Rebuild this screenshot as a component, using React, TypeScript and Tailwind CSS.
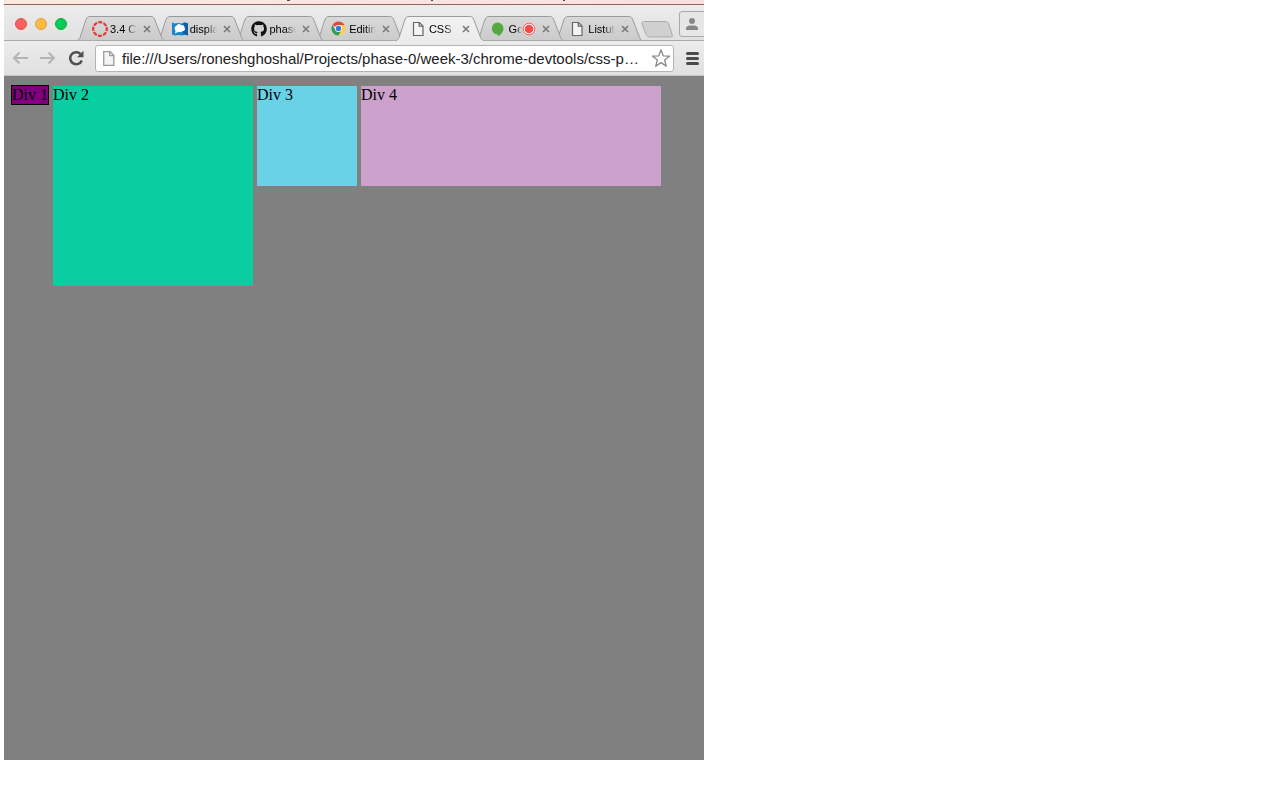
import type { ReactNode } from "react";
import { FaGithub } from "react-icons/fa";

function DocIcon({ className }: { className: string }) {
  return (
    <svg viewBox="0 0 14 16" className={className} fill="none" stroke="currentColor" strokeWidth="1.2">
      <path d="M2.5 1.5h6l3.500 3.500v9.500h-9.500z" fill="#f4f4f4" />
      <path d="M8.2 1.5v3.700h3.700" />
    </svg>
  );
}

function CanvasIcon() {
  return (
    <svg viewBox="0 0 16 16" className="size-4" fill="none">
      <circle cx="8" cy="8" r="6.8" stroke="#e5392d" strokeWidth="2.2" strokeDasharray="4.1 1.24" strokeDashoffset="2" />
    </svg>
  );
}

function DisplayIcon() {
  return (
    <svg viewBox="0 0 16 16" className="size-4">
      <path d="M0 1.500l3 1 3-.5 4 .5 3-1 3 1v12l-3-1-3 1-4-.5-3 .5-3-1z" fill="#1a86c8" />
      <path d="M11 2l2-.5 3 1v12l-3-1-2 .5z" fill="#0d62a4" />
      <path d="M5 4.200c1-1.500 3-1.500 4 0 2-.5 3.800.5 3.500 2.500 1.300 1.600 0 3.500-2.300 3.500-1 1.200-2.700 1.300-3.700.6L3 12.500l.6-2.700C2 8.500 2.500 5 5 4.200z" fill="#fff" />
    </svg>
  );
}

function ChromeIcon() {
  return (
    <svg viewBox="0 0 16 16" className="size-[15px]">
      <path d="M8 8L1.500 4.250A7.500 7.500 0 0 1 14.500 4.250z" fill="#dd4b3e" />
      <path d="M8 8V4.250h6.500A7.500 7.500 0 0 1 8 15.500L11 10z" fill="#fcd04b" />
      <path d="M8 8l3 2-3 5.500A7.500 7.500 0 0 1 1.500 4.250L5 10z" fill="#33a05a" />
      <circle cx="8" cy="8" r="3.700" fill="#fff" />
      <circle cx="8" cy="8" r="2.900" fill="#3b78d8" />
    </svg>
  );
}

function HangoutsIcon() {
  return (
    <svg viewBox="0 0 14 16" className="h-4 w-3.5">
      <path d="M6.500 1.500a6 6 0 0 1 6 6c0 3.500-2.700 6.200-5.500 8v-2A6 6 0 1 1 6.500 1.500z" fill="#53a93f" />
    </svg>
  );
}

function RecordIcon() {
  return (
    <svg viewBox="0 0 14 14" className="size-3.5 shrink-0">
      <circle cx="7" cy="7" r="5.800" fill="#fff" stroke="#f8625e" />
      <circle cx="7" cy="7" r="4.300" fill="#fb4848" />
    </svg>
  );
}

type TabInfo = { title: string; icon: ReactNode; layer: string; active?: boolean; recording?: boolean };

const tabs: TabInfo[] = [
  { title: "3.4 C", icon: <CanvasIcon />, layer: "z-7" },
  { title: "displa", icon: <DisplayIcon />, layer: "z-6" },
  { title: "phase", icon: <FaGithub className="size-4 text-[#111]" />, layer: "z-5" },
  { title: "Editin", icon: <ChromeIcon />, layer: "z-4" },
  { title: "CSS", icon: <DocIcon className="h-4 w-3.5 text-[#666]" />, layer: "z-10", active: true },
  { title: "Go", icon: <HangoutsIcon />, layer: "z-3", recording: true },
  { title: "Listut", icon: <DocIcon className="h-4 w-3.5 text-[#666]" />, layer: "z-2" },
];

function Tab({ title, icon, layer, active, recording }: TabInfo) {
  return (
    <li className={`relative -ml-2 h-[25px] min-w-0 flex-1 ${layer}`}>
      <svg viewBox="0 0 88 25" preserveAspectRatio="none" className="absolute inset-0 size-full">
        <defs>
          <linearGradient id="tab-idle" x1="0" y1="0" x2="0" y2="1">
            <stop offset="0" stopColor="#d9d9d9" />
            <stop offset="1" stopColor="#cbcbcb" />
          </linearGradient>
          <linearGradient id="tab-active" x1="0" y1="0" x2="0" y2="1">
            <stop offset="0" stopColor="#f2f2f2" />
            <stop offset="1" stopColor="#ebebeb" />
          </linearGradient>
        </defs>
        <path
          d="M0 24.500C2 24.300 2.500 23 3.200 21.200L8.500 5C9.500 2 10.500.5 13 .5H74C76.500.5 77.500 2 78.500 5L84.800 21.200C85.500 23 86 24.300 88 24.500"
          fill={active ? "url(#tab-active)" : "url(#tab-idle)"}
          stroke="#9a9a9a"
        />
        {active ? <path d="M1 24.500H87" stroke="#ebebeb" /> : <path d="M0 24.500H88" stroke="#aaa" />}
      </svg>
      <div className="relative flex h-full items-center pl-[15px]">
        <span className="flex w-[18px] shrink-0">{icon}</span>
        <span className={`shrink-0 overflow-hidden whitespace-nowrap text-[11px] leading-4 text-black mask-r-from-60% ${recording ? "w-[13px]" : "w-[27px]"}`}>
          {title}
        </span>
        {recording && <RecordIcon />}
        <button type="button" aria-label={`Close ${title}`} className="ml-1 flex size-3 shrink-0 items-center justify-center text-[#777]">
          <svg viewBox="0 0 8 8" className="size-2" stroke="currentColor" strokeWidth="1.500">
            <path d="M1 1l6 6M7 1l-6 6" />
          </svg>
        </button>
      </div>
    </li>
  );
}

export default function App() {
  return (
    <div className="min-h-screen bg-white px-1">
      <div className="flex min-h-[95vh] w-full max-w-[700px] flex-col overflow-hidden font-['Liberation_Sans',sans-serif]">
        <div className="h-[5px] border-b border-[#91645c] bg-linear-to-r from-[#fdeade] to-[#fadfe3]">
          <svg viewBox="0 0 700 4" className="h-1 w-full" fill="#5c4450">
            <path d="M283 0h3v1h-3zM427 0h2v1h-2zM559 0h2v1h-2z" />
          </svg>
        </div>
        <header className="bg-linear-to-b from-[#ececec] to-[#d6d6d6]">
          <div className="flex h-9 items-end justify-between border-b border-[#aaa]">
            <div className="flex items-end">
              <div className="mb-2.5 flex gap-2 pl-[11px]">
                <button type="button" aria-label="Close window" className="size-3 rounded-full border border-[#e2504c] bg-[#fc605c]" />
                <button type="button" aria-label="Minimize window" className="size-3 rounded-full border border-[#dfa23b] bg-[#fdbc40]" />
                <button type="button" aria-label="Zoom window" className="size-3 rounded-full border border-[#0dab43] bg-[#04ce56]" />
              </div>
              <ul className="-mb-px ml-2.5 flex w-[566px] pl-2">
                {tabs.map((tab) => (
                  <Tab key={tab.title} {...tab} />
                ))}
              </ul>
              <button type="button" aria-label="New tab" className="-ml-0.5 mb-0.5">
                <svg viewBox="0 0 32 17" className="h-[17px] w-8" fill="#d0d0d0" stroke="#aaa">
                  <path d="M3.500.5H24c2 0 3 .8 3.700 2.500l3.500 10.500c.6 1.800 0 2.500-1.500 2.500H9c-2 0-3-.8-3.800-2.500L1 3C.5 1.500 1.500.5 3.500.5z" />
                </svg>
              </button>
            </div>
            <button type="button" aria-label="Profile" className="-mr-1 mb-[3px] flex h-[26px] w-[29px] shrink-0 items-center rounded-[3px] border border-[#a9a9a9] bg-[#e6e6e6] pl-1.5">
              <svg viewBox="0 0 12 12" className="size-3" fill="#888">
                <circle cx="6" cy="3" r="3" />
                <path d="M0 12V10.500C0 8 3 7.500 6 7.500s6 .5 6 3V12z" />
              </svg>
            </button>
          </div>
          <div className="flex h-[35px] items-center border-b border-[#c4c4c4] bg-linear-to-b from-[#ececec] to-[#e0e0e0] pl-2">
            <button type="button" aria-label="Back" className="text-[#b5b5b5]">
              <svg viewBox="0 0 16 14" className="h-3.5 w-4" fill="none" stroke="currentColor" strokeWidth="2">
                <path d="M7.500 1.500L2 7l5.500 5.500M2 7h14" />
              </svg>
            </button>
            <button type="button" aria-label="Forward" className="ml-3 text-[#b5b5b5]">
              <svg viewBox="0 0 16 14" className="h-3.5 w-4" fill="none" stroke="currentColor" strokeWidth="2">
                <path d="M8.500 1.500L14 7l-5.500 5.500M14 7H0" />
              </svg>
            </button>
            <button type="button" aria-label="Reload" className="ml-3 text-[#505050]">
              <svg viewBox="0 0 16 16" className="size-4" fill="none" stroke="currentColor" strokeWidth="2.500">
                <path d="M13.800 10.500A6 6 0 1 1 12.500 4" />
                <path d="M15.500.8V7.200H9z" fill="currentColor" stroke="none" />
              </svg>
            </button>
            <div className="ml-[11px] flex h-[27px] min-w-0 flex-1 items-center rounded-[3px] border border-[#b3b3b3] bg-white pl-[5px] pr-0.5">
              <DocIcon className="h-[17px] w-[15px] shrink-0 text-[#999]" />
              <input
                aria-label="Address"
                readOnly
                defaultValue="file:///Users/roneshghoshal/Projects/phase-0/week-3/chrome-devtools/css-playground/index.html"
                className="ml-1.5 min-w-0 flex-1 text-ellipsis bg-transparent pt-0.5 text-[15px] text-[#222] outline-none"
              />
              <button type="button" aria-label="Bookmark" className="ml-2.5 text-[#888]">
                <svg viewBox="0 0 20 20" className="size-5" fill="none" stroke="currentColor" strokeWidth="1.300" strokeLinejoin="round">
                  <path d="M10 1.800l2.200 6 6.400.3-5 3.900 1.700 6.200-5.300-3.600-5.300 3.600 1.700-6.200-5-3.900 6.400-.3z" />
                </svg>
              </button>
            </div>
            <button type="button" aria-label="Menu" className="ml-3 mr-[5px] flex w-[13px] flex-col gap-0.5">
              <span className="h-[3px] rounded-full bg-[#4a4a4a]" />
              <span className="h-[3px] rounded-full bg-[#4a4a4a]" />
              <span className="h-[3px] rounded-full bg-[#4a4a4a]" />
            </button>
          </div>
        </header>
        <main className="flex flex-1 items-start gap-1 bg-[#808080] pl-[7px] pt-[9px] font-['Liberation_Serif',serif] text-base leading-[18px] text-black">
          <div className="shrink-0 border border-black bg-[#800080]">Div 1</div>
          <div className="mt-px h-[200px] w-[200px] bg-[#0acda1]">Div 2</div>
          <div className="mt-px h-[100px] w-[100px] bg-[#6ad2e6]">Div 3</div>
          <div className="mt-px h-[100px] w-[300px] bg-[#cca1cc]">Div 4</div>
        </main>
      </div>
    </div>
  );
}
